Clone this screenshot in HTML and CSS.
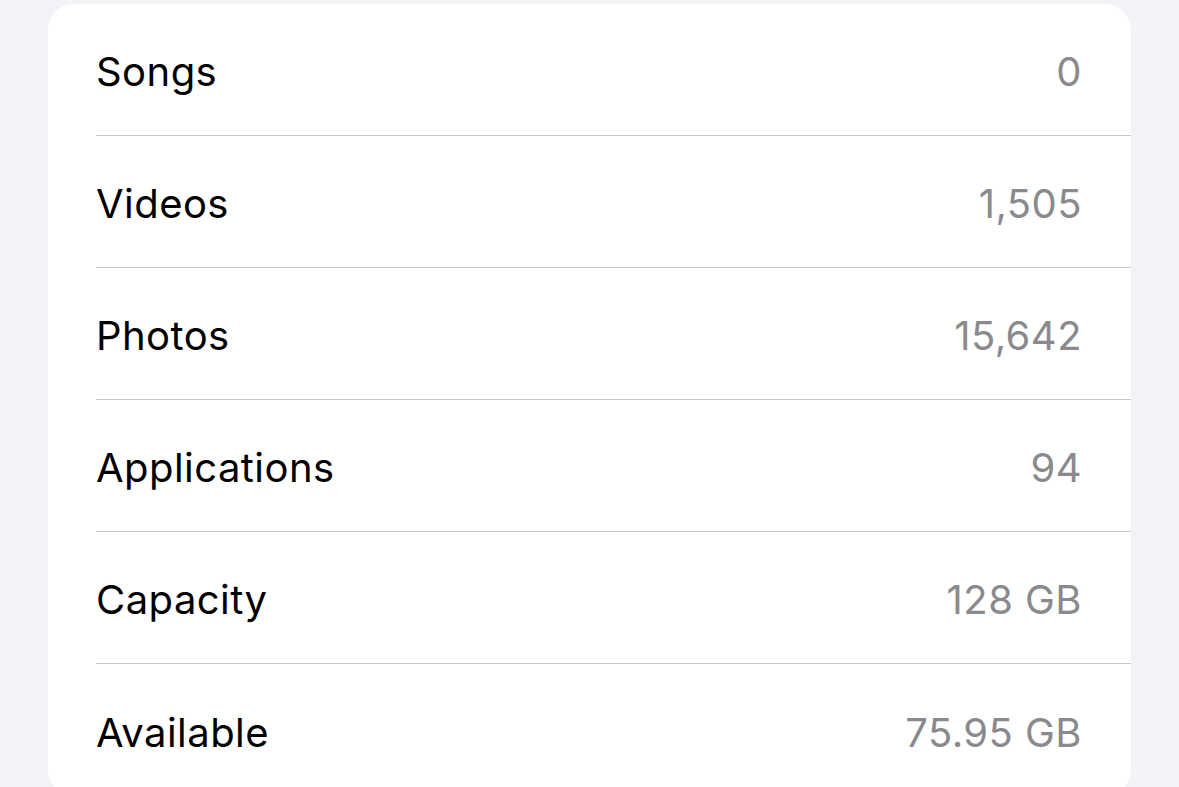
FILE: index.html
```html
<!DOCTYPE html>
<html lang="en">
<head>
    <meta charset="UTF-8"/>
    <meta name="viewport" content="width=device-width, initial-scale=1.0"/>
    <title>About</title>
    <link rel="stylesheet" href="styles.css">
</head>
<body>
    <div class="card">
        <div class="row">
            <span class="label">Songs</span>
            <span class="value">0</span>
        </div>
        <div class="row">
            <span class="label">Videos</span>
            <span class="value">1,505</span>
        </div>
        <div class="row">
            <span class="label">Photos</span>
            <span class="value">15,642</span>
        </div>
        <div class="row">
            <span class="label">Applications</span>
            <span class="value">94</span>
        </div>
        <div class="row">
            <span class="label">Capacity</span>
            <span class="value">128 GB</span>
        </div>
        <div class="row">
            <span class="label">Available</span>
            <span class="value">75.95 GB</span>
        </div>
    </div>
</body>
</html>
```

FILE: styles.css
```css
body {
    margin: 0;
    padding: 4px 0 0 48px;
    background: #f2f2f7;
    font-family: Inter, "Noto Sans", sans-serif;
    overflow: hidden;
}
.card {
    width: 1083px;
    background: #ffffff;
    border-radius: 26px;
    padding-left: 48px;
    box-sizing: border-box;
}
.row {
    height: 132px;
    display: flex;
    align-items: center;
    justify-content: space-between;
    padding: 4px 50px 0 0;
    box-sizing: border-box;
    border-bottom: 1px solid #c8c7cc;
    font-size: 40px;
    letter-spacing: 0.45px;
}
.row:last-child {
    border-bottom: none;
}
.label {
    color: #000000;
}
.value {
    color: #8a8a8e;
    margin-right: -1px;
}
```
